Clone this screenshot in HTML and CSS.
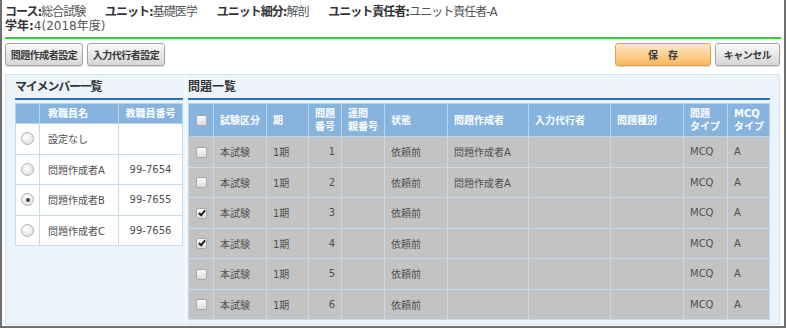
FILE: index.html
```html
<!DOCTYPE html>
<html>
<head>
    <title>問題作成者設定</title>
    <link rel="stylesheet" href="styles.css">
</head>
<body>
    <div class="frame">
        <div class="course-info">
            <div class="info-line narrow">
                <span class="info-item"><b>コース:</b>総合試験</span>
                <span class="info-item"><b>ユニット:</b>基礎医学</span>
                <span class="info-item"><b>ユニット細分:</b>解剖</span>
                <span class="info-item"><b>ユニット責任者:</b>ユニット責任者-A</span>
            </div>
            <div class="info-line">
                <span class="info-item"><b>学年:</b>4(2018年度)</span>
            </div>
        </div>

        <div class="toolbar">
            <div class="btn-group">
                <button class="btn">問題作成者設定</button>
                <button class="btn">入力代行者設定</button>
            </div>
            <div class="btn-group">
                <button class="btn btn-save">保　存</button>
                <button class="btn btn-cancel">キャンセル</button>
            </div>
        </div>

        <div class="panel">
            <!-- My members -->
            <section class="member-list">
                <h3 class="section-title kana">マイメンバー一覧</h3>
                <table class="member-table">
                    <colgroup>
                        <col style="width: 24px;">
                        <col style="width: 79px;">
                        <col>
                    </colgroup>
                    <thead>
                        <tr>
                            <th></th>
                            <th>教職員名</th>
                            <th class="center">教職員番号</th>
                        </tr>
                    </thead>
                    <tbody>
                        <tr>
                            <td class="center"><span class="radio"></span></td>
                            <td>設定なし</td>
                            <td class="center"></td>
                        </tr>
                        <tr>
                            <td class="center"><span class="radio"></span></td>
                            <td>問題作成者A</td>
                            <td class="center">99-7654</td>
                        </tr>
                        <tr>
                            <td class="center"><span class="radio checked"></span></td>
                            <td>問題作成者B</td>
                            <td class="center">99-7655</td>
                        </tr>
                        <tr>
                            <td class="center"><span class="radio"></span></td>
                            <td>問題作成者C</td>
                            <td class="center">99-7656</td>
                        </tr>
                    </tbody>
                </table>
            </section>

            <!-- Questions -->
            <section class="question-list">
                <h3 class="section-title">問題一覧</h3>
                <table class="question-table">
                    <colgroup>
                        <col style="width: 25px;">
                        <col style="width: 53px;">
                        <col style="width: 42px;">
                        <col style="width: 33px;">
                        <col style="width: 43px;">
                        <col style="width: 63px;">
                        <col style="width: 81px;">
                        <col style="width: 82px;">
                        <col style="width: 73px;">
                        <col style="width: 44px;">
                        <col>
                    </colgroup>
                    <thead>
                        <tr>
                            <th class="center"><span class="checkbox"></span></th>
                            <th>試験区分</th>
                            <th>期</th>
                            <th>問題<br>番号</th>
                            <th>連問<br>親番号</th>
                            <th>状態</th>
                            <th>問題作成者</th>
                            <th>入力代行者</th>
                            <th>問題種別</th>
                            <th>問題<br>タイプ</th>
                            <th>MCQ<br>タイプ</th>
                        </tr>
                    </thead>
                    <tbody>
                        <tr>
                            <td class="center"><span class="checkbox"></span></td>
                            <td>本試験</td><td>1期</td><td class="num">1</td><td></td>
                            <td>依頼前</td><td>問題作成者A</td><td></td><td></td>
                            <td>MCQ</td><td>A</td>
                        </tr>
                        <tr>
                            <td class="center"><span class="checkbox"></span></td>
                            <td>本試験</td><td>1期</td><td class="num">2</td><td></td>
                            <td>依頼前</td><td>問題作成者A</td><td></td><td></td>
                            <td>MCQ</td><td>A</td>
                        </tr>
                        <tr>
                            <td class="center"><span class="checkbox checked"></span></td>
                            <td>本試験</td><td>1期</td><td class="num">3</td><td></td>
                            <td>依頼前</td><td></td><td></td><td></td>
                            <td>MCQ</td><td>A</td>
                        </tr>
                        <tr>
                            <td class="center"><span class="checkbox checked"></span></td>
                            <td>本試験</td><td>1期</td><td class="num">4</td><td></td>
                            <td>依頼前</td><td></td><td></td><td></td>
                            <td>MCQ</td><td>A</td>
                        </tr>
                        <tr>
                            <td class="center"><span class="checkbox"></span></td>
                            <td>本試験</td><td>1期</td><td class="num">5</td><td></td>
                            <td>依頼前</td><td></td><td></td><td></td>
                            <td>MCQ</td><td>A</td>
                        </tr>
                        <tr>
                            <td class="center"><span class="checkbox"></span></td>
                            <td>本試験</td><td>1期</td><td class="num">6</td><td></td>
                            <td>依頼前</td><td></td><td></td><td></td>
                            <td>MCQ</td><td>A</td>
                        </tr>
                    </tbody>
                </table>
            </section>
        </div>
    </div>
</body>
</html>
```

FILE: styles.css
```css
/* General */
body {
    margin: 0;
    padding: 0;
    background-color: #fff;
    font-family: "DejaVu Sans", "Noto Sans CJK JP", sans-serif;
    color: #444;
}

.frame {
    width: 786px;
    height: 328px;
    box-sizing: border-box;
    border: 2px solid #6f6f6f;
    border-top: none;
    padding: 4px 3px 0 3px;
}

/* Course info */
.course-info {
    font-size: 12px;
    line-height: 14px;
    color: #555;
    padding-bottom: 4px;
    border-bottom: 2px solid #33cc33;
}

.info-line {
    white-space: nowrap;
    margin-top: 1px;
}

.info-line + .info-line {
    margin-top: 0;
}

.info-item {
    margin-right: 16px;
}

.info-line.narrow .info-item {
    letter-spacing: -1px;
}

.info-item b {
    color: #333;
}

/* Toolbar */
.toolbar {
    display: flex;
    justify-content: space-between;
    margin-top: 4px;
    padding-right: 1px;
}

.btn-group {
    display: flex;
    gap: 4px;
}

.btn {
    width: 78px;
    height: 23px;
    padding: 0;
    border: 1px solid #a3a3a3;
    border-radius: 3px;
    background: linear-gradient(#f9f9f9, #d6d6d6);
    box-shadow: 0 1px 1px rgba(0, 0, 0, 0.15);
    font-family: "DejaVu Sans", "Noto Sans CJK JP", sans-serif;
    font-size: 10px;
    font-weight: bold;
    letter-spacing: -0.5px;
    color: #3a3a3a;
    cursor: pointer;
}

.btn-save {
    width: 96px;
    border-color: #e3a24a;
    background: linear-gradient(#fde9c8, #f8b85e);
    letter-spacing: 0;
}

.btn-cancel {
    width: 65px;
}

/* Panel */
.panel {
    display: flex;
    margin-top: 8px;
    height: 251px;
    box-sizing: border-box;
    margin-right: 1px;
    border: 1px solid #d5e2ef;
    background-color: #ebf3fb;
    padding: 0 9px 0 9px;
}

.section-title {
    margin: 0 0 3px 0;
    padding: 4px 0 3px 0;
    font-size: 12px;
    line-height: 16px;
    font-weight: bold;
    color: #333;
    border-bottom: 2px solid #2a6ec2;
}

.section-title.kana {
    letter-spacing: -1.2px;
}

.member-list {
    width: 168px;
    flex: none;
}

.question-list {
    flex: 1;
    margin-left: 2px;
    padding-left: 2px;
    border-left: 1px solid #fff;
}

/* Tables */
table {
    width: 100%;
    border-collapse: collapse;
    table-layout: fixed;
    font-size: 10px;
}

th {
    background-color: #87b4de;
    color: #fff;
    font-weight: bold;
    text-align: left;
    padding: 0 6px;
    line-height: 13px;
    border: 1px solid #b8d3ec;
    white-space: nowrap;
}

td {
    padding: 0 6px;
    height: 29.5px;
    border: 1px solid #c5dbef;
    color: #4f4f4f;
    white-space: nowrap;
}

.center {
    text-align: center;
    padding: 0;
}

.num {
    text-align: right;
}

.member-table {
    border: 1px solid #9fc4e7;
}

.member-table th {
    height: 19px;
    padding-left: 8px;
}

.member-table td {
    background-color: #fff;
    padding-left: 8px;
}

.member-table .center {
    padding: 0;
}

.question-table {
    border: 1px solid #a6c8e9;
}

.question-table th {
    height: 32px;
}

.question-table td {
    background-color: #c3c3c3;
}

/* Form controls */
.radio {
    display: inline-block;
    width: 11px;
    height: 11px;
    border: 1px solid #b0b0b0;
    border-radius: 50%;
    background: radial-gradient(circle at 40% 35%, #fff, #d9d9d9);
    vertical-align: middle;
    position: relative;
}

.radio.checked::after {
    content: "";
    position: absolute;
    left: 3.5px;
    top: 3.5px;
    width: 4px;
    height: 4px;
    border-radius: 50%;
    background-color: #444;
}

.checkbox {
    display: inline-block;
    width: 9px;
    height: 9px;
    border: 1px solid #a8a8a8;
    border-radius: 2px;
    background: linear-gradient(#fafafa, #dcdcdc);
    vertical-align: middle;
    position: relative;
}

.checkbox.checked::after {
    content: "";
    position: absolute;
    left: 3px;
    top: 0px;
    width: 2px;
    height: 5px;
    border: solid #222;
    border-width: 0 2px 2px 0;
    transform: rotate(40deg);
}
```
